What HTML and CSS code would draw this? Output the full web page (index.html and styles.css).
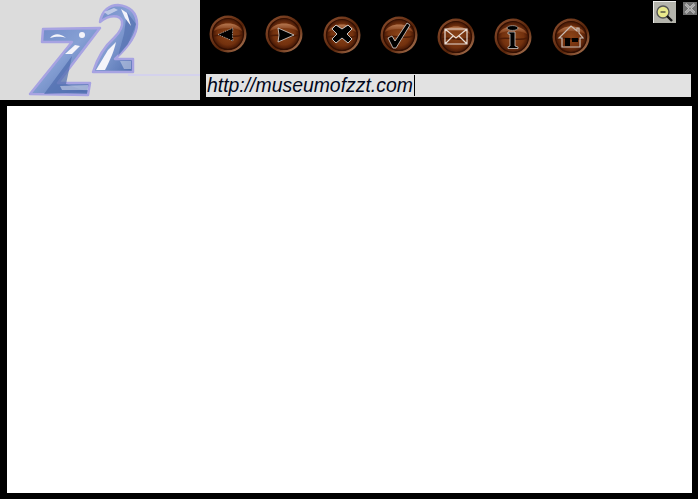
FILE: index.html
```html
<!DOCTYPE html>
<html lang="en">
<head>
    <meta charset="UTF-8">
    <meta name="viewport" content="width=device-width, initial-scale=1.0">
    <title>Z2</title>
    <link rel="stylesheet" href="styles.css">
</head>
<body>
    <svg class="defs" width="0" height="0">
        <defs>
            <radialGradient id="wood" cx="50%" cy="50%" r="50%">
                <stop offset="0" stop-color="#8c4519"/>
                <stop offset="0.7" stop-color="#73310e"/>
                <stop offset="1" stop-color="#421605"/>
            </radialGradient>
            <linearGradient id="rim" x1="0.1" y1="0.1" x2="0.9" y2="0.9">
                <stop offset="0" stop-color="#84492a"/>
                <stop offset="0.6" stop-color="#582409"/>
                <stop offset="1" stop-color="#a87250"/>
            </linearGradient>
            <linearGradient id="shine" x1="0" y1="0" x2="0" y2="1">
                <stop offset="0" stop-color="#b57750"/>
                <stop offset="1" stop-color="#7c3611"/>
            </linearGradient>
            <linearGradient id="chrome" x1="0" y1="0" x2="1" y2="1">
                <stop offset="0" stop-color="#6f88c6"/>
                <stop offset="0.45" stop-color="#86a0d4"/>
                <stop offset="1" stop-color="#4c6aac"/>
            </linearGradient>
            <filter id="soft"><feGaussianBlur stdDeviation="0.6"/></filter>
            <symbol id="knob" viewBox="0 0 38 38">
                <circle cx="19" cy="19" r="18.5" fill="url(#rim)"/>
                <circle cx="19" cy="19" r="15.5" fill="url(#wood)" stroke="#320f02" stroke-width="1.2"/>
                <path d="M5 16 C8 6 30 6 33 16 C26 12 12 12 5 16Z" fill="url(#shine)"/>
                <path d="M5 21 C14 18 24 24 33 20" fill="none" stroke="#4e1c06" stroke-width="1.5"/>
            </symbol>
        </defs>
    </svg>

    <div class="top">
        <div class="logo">
            <svg width="200" height="100" viewBox="0 0 200 100">
                <path d="M128 75 H200" stroke="#d4d2ec" stroke-width="2"/>
                <g filter="url(#soft)">
                    <g stroke="#a7a3e2" stroke-width="2.5" stroke-linejoin="round" fill="url(#chrome)">
                        <path d="M43 29 L100 28 L58 83 L90 83 L88 95 L30 94 L72 42 L42 42Z"/>
                        <path d="M100 22 C102 10 110 5 118 5 C130 6 137 13 137 24 C137 36 127 48 115 59 L133 59 L133 72 L93 72 C98 56 106 45 114 38 C121 31 123 26 122 21 C120 15 110 14 100 22Z"/>
                    </g>
                    <path d="M44 94 L72 56 L66 84 L88 92Z" fill="#4e6cae" fill-opacity="0.7"/>
                    <path d="M127 12 L136 24 L128 44 L118 56 L124 34Z" fill="#5a76b4" fill-opacity="0.8"/>
                    <g fill="#f4f4fa">
                        <path d="M50 38 C54 33 60 33 66 38 C60 36 55 37 50 38Z"/>
                        <circle cx="82" cy="35" r="3"/>
                        <path d="M65 54 L75 45 L80 46 L72 54Z"/>
                        <path d="M96 70 L108 50 L116 42 C114 52 109 62 105 70Z"/>
                        <path d="M121 9 L127 13 L131 26 L125 18Z"/>
                        <path d="M60 86 L88 85 L88 90 L62 90Z" fill-opacity="0.45"/>
                        <path d="M120 61 L131 61 L131 69 L124 69Z" fill-opacity="0.4"/>
                        <path d="M104 12 L114 8 L118 10 L108 15Z" fill-opacity="0.55"/>
                    </g>
                </g>
            </svg>
        </div>
        <div class="toolbar">
            <div class="buttons">
                <svg class="btn b1" viewBox="0 0 38 38"><use href="#knob"/><path d="M9 19.5 L24 13 Q23 19 24 26Z" fill="#000" stroke="#ddd" stroke-width="0.6" stroke-dasharray="1.5 1"/></svg>
                <svg class="btn b1 pull" viewBox="0 0 38 38"><use href="#knob"/><path d="M13 13 L29 20 L13 27 Q15 20 13 13Z" fill="#000" stroke="#eee" stroke-width="0.7"/></svg>
                <svg class="btn b2 push" viewBox="0 0 38 38"><use href="#knob"/><path d="M9 13 L13 9 L19 13 L25 9 L29 13 L24 18 L29 23 L25 27 L19 22 L13 27 L9 23 L14 18Z" fill="#000" stroke="#eee" stroke-width="0.8" stroke-linejoin="round"/></svg>
                <svg class="btn b2" viewBox="0 0 38 38"><use href="#knob"/><path d="M8 22 L12 20 L15 25 L27 7 L30 9 L16 32 L13 32Z" fill="#000" stroke="#eee" stroke-width="0.7"/></svg>
                <svg class="btn b3" viewBox="0 0 38 38"><use href="#knob"/><path d="M8 11 H30 V26 H8Z M8 11 L19 20 L30 11 M8 26 L16 18 M30 26 L22 18" fill="none" stroke="#e8dcd4" stroke-width="1.2"/></svg>
                <svg class="btn b3" viewBox="0 0 38 38"><use href="#knob"/><ellipse cx="18.5" cy="10" rx="5.5" ry="2.4" fill="#000" stroke="#ccc" stroke-width="0.6"/><path d="M14 14 H21 V28 L24 29 V30.5 H14 V29 L16 28 V16 L14 16Z" fill="#000" stroke="#ddd" stroke-width="0.7"/></svg>
                <svg class="btn b3 push" viewBox="0 0 38 38"><use href="#knob"/><path d="M7 20 L19 8 L25 13 V10 H27 V15 L31 20 H28 V29 H10 V20Z" fill="none" stroke="#c8bcb4" stroke-width="1.2"/><path d="M13 20 H18 V28 H13Z M20 20 H26 V24 H20Z" fill="#000"/></svg>
            </div>
            <div class="url"><span class="url-text">http://museumofzzt.com</span></div>
        </div>
    </div>

    <div class="content"></div>

    <div class="window-btns">
        <svg class="zoom-btn" width="23" height="22" viewBox="0 0 23 22">
            <rect width="23" height="22" fill="#b4b4ac"/>
            <path d="M0 22 V0 H23" fill="none" stroke="#fff" stroke-width="1.5"/>
            <circle cx="10" cy="11" r="6" fill="#e8e88c" stroke="#555" stroke-width="1.4"/>
            <path d="M7.5 11 H12.5" stroke="#333" stroke-width="1.2"/>
            <path d="M14 15 L19 20" stroke="#111" stroke-width="2.4"/>
        </svg>
        <svg class="close-btn" width="14" height="13" viewBox="0 0 14 13">
            <rect width="14" height="13" fill="#707070"/>
            <path d="M2.5 2 L11.5 11 M11.5 2 L2.5 11" stroke="#dcdcdc" stroke-width="2.4"/>
            <path d="M2.5 2 L11.5 11 M11.5 2 L2.5 11" stroke="#444" stroke-width="0.7"/>
        </svg>
    </div>
</body>
</html>
```

FILE: styles.css
```css
/* page */
html, body {
    margin: 0;
    padding: 0;
    background-color: #000;
    overflow: hidden;
}
body {
    width: 698px;
    height: 499px;
    position: relative;
}
.defs {
    display: block;
    height: 0;
}

/* top strip */
.top {
    display: flex;
    height: 100px;
}
.logo {
    width: 200px;
    height: 100px;
    background-color: #dcdcdc;
}
.logo svg {
    display: block;
}
.toolbar {
    flex: 1;
    padding-left: 6px;
}
.buttons {
    display: flex;
    height: 74px;
    padding-left: 3px;
    gap: 19px;
}
.btn {
    width: 38px;
    height: 38px;
}
.b1 { margin-top: 15px; }
.b2 { margin-top: 16px; }
.b3 { margin-top: 18px; }
.pull { margin-left: -1px; }
.push { margin-left: 1px; }

/* address box */
.url {
    width: 485px;
    height: 23px;
    background-color: #e2e2e2;
    font-family: "Liberation Sans", Arial, sans-serif;
    font-style: italic;
    font-size: 19.4px;
    line-height: 21px;
    color: #00061a;
    padding: 1px 0 0 1px;
    box-sizing: border-box;
}
.url-text {
    display: inline-block;
    height: 21px;
    line-height: 20px;
    border-right: 1px solid #000;
    padding-right: 1px;
}

/* main white panel */
.content {
    width: 685px;
    height: 387px;
    margin: 6px 0 0 7px;
    background-color: #fff;
}

/* zoom and close, over the top right corner */
.window-btns {
    position: absolute;
    top: 1px;
    right: 1px;
    display: flex;
    gap: 7px;
    align-items: flex-start;
}
.window-btns svg {
    display: block;
}
.close-btn {
    margin-top: 1px;
}
```
